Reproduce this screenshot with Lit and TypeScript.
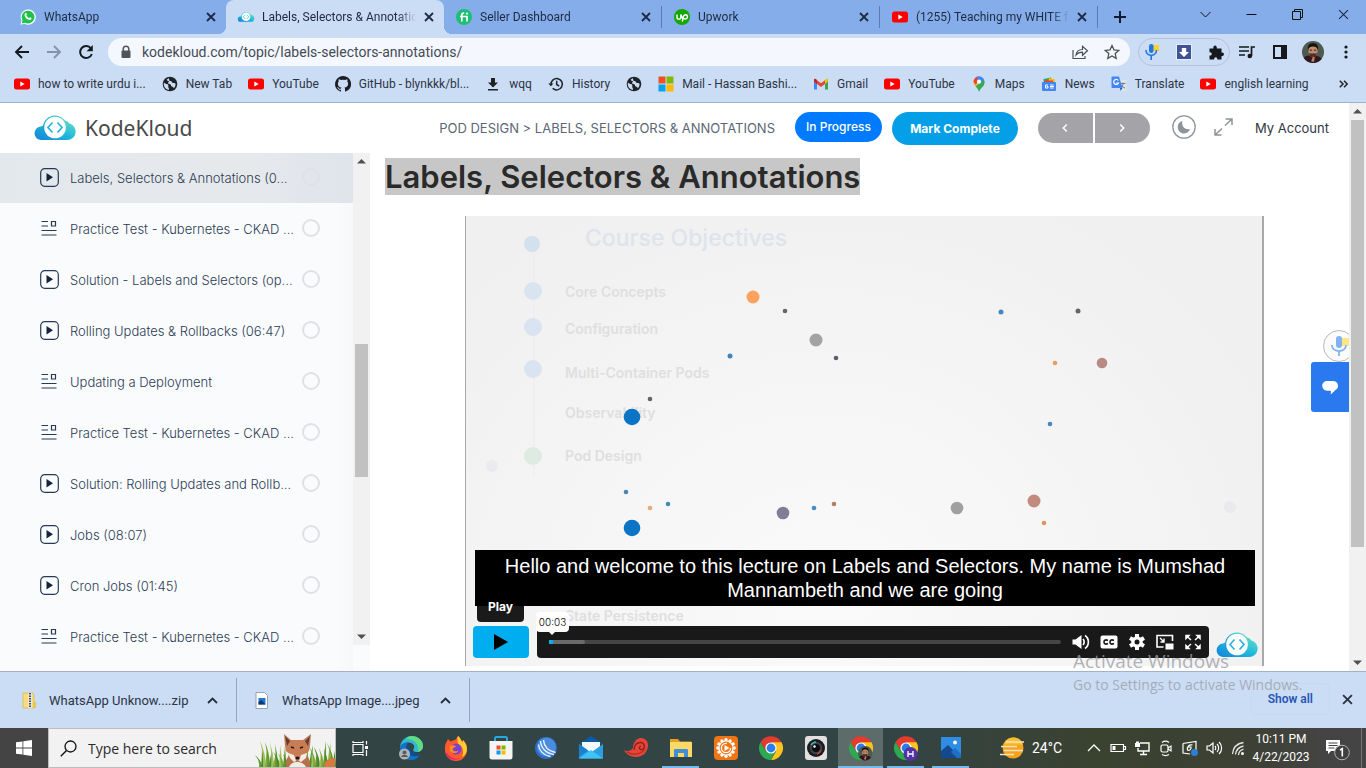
import { LitElement, html, css, svg, nothing } from "lit";
import { customElement } from "lit/decorators.js";
import { classMap } from "lit/directives/class-map.js";

const cloudLogo = html`<svg class="cloud" viewBox="0 0 40 26" aria-hidden="true">
  <defs>
    <linearGradient id="cl" x1="0" y1="1" x2="1" y2="0">
      <stop offset="0" stop-color="#1283d8" /><stop offset=".5" stop-color="#1fb6dc" /><stop offset="1" stop-color="#6fe3c0" />
    </linearGradient>
  </defs>
  <path d="M6.500 25a6.500 6.500 0 0 1-.5-13.400 6 6 0 0 1 4-1.100L19 4l11 1.500a8 8 0 0 1 4.500 3A8.400 8.400 0 0 1 32 25z" fill="url(#cl)" />
  <circle cx="20" cy="12.500" r="12" fill="url(#cl)" />
  <circle cx="20" cy="12.500" r="10.800" fill="#fff" />
  <path d="M17.500 7.500l-4.500 5 4.500 5M22.500 7.500l4.500 5-4.500 5" fill="none" stroke="#27b4e0" stroke-width="1.700" />
</svg>`;

const ytIcon = html`<svg viewBox="0 0 16 16"><rect y="2.500" width="16" height="11" rx="2.500" fill="#f00" /><path d="M6.300 5.500v5L10.700 8z" fill="#fff" /></svg>`;

const globeIcon = html`<svg viewBox="0 0 16 16"><circle cx="8" cy="8" r="7.300" fill="#1f2226" />
  <path d="M2 6.500c1.500 2 3.500 1.200 4.200 2.300.6 1-.6 1.700.3 2.700.7.8.5 1.800.2 2.600C3.800 13.400 1.800 11 1.700 8zM7 2.200c.6 1-.4 1.500.3 2.200 1 .8 2.300.2 2.500 1.500.2 1.400 2.500.4 3.700 1.800.3 1.800-.6 3.500-1.800 4.600-.3-1.200-.8-1.600-1.800-1.800-1.200-.3-.5-1.600-1.300-2.100-1-.6-2.400 0-2.500-1.300 0-1 1-1 .8-1.800C6.700 4.400 5 5 4.700 3.700 5.400 3 6.200 2.500 7 2.200z" fill="#cbdcf5" /></svg>`;

const icons = {
  whatsapp: html`<svg viewBox="0 0 16 16"><path d="M.4 15.800l1.200-4A7.600 7.600 0 1 1 4.500 14.700z" fill="#fff" /><path d="M1.700 14.500l.9-3.100a6.400 6.400 0 1 1 2.400 2.300z" fill="#1fc14b" /><path d="M5.200 4.200c.5-.5 1-.3 1.200.1l.5 1.200c.1.300-.5.800-.5 1.100.5 1.200 1.600 2 2.600 2.500.4 0 .7-.8 1-.8l1.500.8c.2.900-.6 1.800-1.600 1.800-2.700-.1-5.400-3-5.400-5 0-.7.300-1.300.7-1.700z" fill="#fff" /></svg>`,
  kk: cloudLogo,
  fiverr: html`<svg viewBox="0 0 16 16"><circle cx="8" cy="8" r="8" fill="#1dbf73" /><path d="M4 7.500h7v5M5.800 12.500V6c0-1.500.8-2 2.400-2" fill="none" stroke="#fff" stroke-width="1.700" /><circle cx="11" cy="4.600" r="1.100" fill="#fff" /></svg>`,
  upwork: html`<svg viewBox="0 0 16 16"><circle cx="8" cy="8" r="8" fill="#14a800" /><path d="M3 5.500v2.700c0 2.600 3.800 2.600 3.800 0V5.500c.4 2 1.500 3.600 3.300 4.400M8.300 12.500l1-4.700c.8-3 4.200-2.500 4.200 0 0 2.300-2.700 2.800-4 1.300" fill="none" stroke="#fff" stroke-width="1.400" /></svg>`,
  yt: ytIcon,
  globe: globeIcon,
  github: html`<svg viewBox="0 0 16 16"><path fill="#1b1f24" d="M8 0a8 8 0 0 0-2.500 15.600c.4.100.5-.2.500-.4v-1.400c-2.200.5-2.700-1-2.700-1-.4-.9-.9-1.200-.9-1.200-.7-.5.100-.5.100-.5.800.100 1.200.8 1.200.8.700 1.200 1.900.9 2.300.7.100-.5.300-.9.500-1.100-1.800-.2-3.600-.9-3.600-4 0-.9.300-1.600.8-2.100-.1-.2-.4-1 .1-2.100 0 0 .7-.2 2.200.8a7.600 7.600 0 0 1 4 0c1.500-1 2.200-.8 2.200-.8.400 1.100.200 1.900.100 2.100.5.600.8 1.300.8 2.100 0 3.100-1.900 3.800-3.700 4 .3.300.6.800.6 1.500v2.200c0 .2.100.5.600.4A8 8 0 0 0 8 0z" /></svg>`,
  download: html`<svg viewBox="0 0 16 16"><path d="M6 2h4v4.500h3L8 11.500l-5-5h3zM3 13h10v1.500H3z" fill="#1f2226" /></svg>`,
  history: html`<svg viewBox="0 0 16 16" fill="none" stroke="#1f2226" stroke-width="1.500"><path d="M3 8.500a5.700 5.700 0 1 1 1.700 3.800M8.700 4.800v3.700l2.500 1.600" /><path d="M.3 7.500h5.200L2.900 10.300z" fill="#1f2226" stroke="none" /></svg>`,
  ms: html`<svg viewBox="0 0 16 16"><path fill="#f25022" d="M.5.500h7v7h-7z" /><path fill="#7fba00" d="M8.500.500h7v7h-7z" /><path fill="#00a4ef" d="M.5 8.500h7v7h-7z" /><path fill="#ffb900" d="M8.500 8.500h7v7h-7z" /></svg>`,
  gmail: html`<svg viewBox="0 0 16 16"><path d="M1 4.500v9h3V7z" fill="#4285f4" /><path d="M15 4.500v9h-3V7z" fill="#34a853" /><path d="M4 4.200l4 3.100 4-3.100V8l-4 3-4-3z" fill="#ea4335" /><path d="M1 5.500V4c0-1.600 1.700-2 3 .2V8z" fill="#c5221f" /><path d="M15 5.500V4c0-1.600-1.700-2-3 .2V8z" fill="#fbbc04" /></svg>`,
  maps: html`<svg viewBox="0 0 16 16"><path d="M8 16c-.7-2.500-2-4-3.500-5.700L12.700 3A6 6 0 0 1 13 9c-1.500 2.400-4.200 4-5 7z" fill="#34a853" /><path d="M4.500 10.300C2.800 8 2 7 2.500 4.500L8 7.500z" fill="#fbbc04" /><path d="M2.500 5.500C2.700 3.600 4 1.500 6 .5l3 3-4.500 5.200z" fill="#ea4335" /><path d="M6 .4C9 -.5 12 1 13 3.300L9.800 7 6.500 4z" fill="#4285f4" /><circle cx="8" cy="5.700" r="2.100" fill="#fff" /></svg>`,
  news: html`<svg viewBox="0 0 16 16"><path d="M2.500 3L10 1.500l1 6-8 1z" fill="#34a853" /><path d="M8 2l6 1.500-1 5H7z" fill="#fbbc04" /><path d="M3 4.500h9v4H3z" fill="#ea4335" /><rect x="1" y="6" width="14" height="9" rx="1" fill="#4285f4" /><path d="M7 9H4.500v3H7v-1.500H5.800M9 9h3.500M9 10.500h4M9 12h3.500" stroke="#fff" fill="none" /></svg>`,
  translate: html`<svg viewBox="0 0 16 16"><path d="M6 4h9.500v11H9z" fill="#dfe3ea" /><path d="M9.500 7.500h5M12 6.500v1c0 2-1 3.500-2.500 4.500M10.500 9c.5 1.500 2 2.500 3.500 3" stroke="#777d88" fill="none" /><path d="M1.500.5H8L11.500 12H1.500c-.6 0-1-.4-1-1V1.500c0-.6.4-1 1-1z" fill="#4285f4" /><path d="M9 12h2.500L9.500 15z" fill="#2a56c6" /><path d="M7.300 4.500A2.500 2.500 0 1 0 7.500 7H5.300" stroke="#fff" fill="none" stroke-width="1.200" /></svg>`,
};

const cross = (w = 1.8) => html`<svg viewBox="0 0 10 10"><path d="M1 1l8 8M9 1L1 9" stroke="currentColor" stroke-width=${w} fill="none" /></svg>`;

const chromeWheel = svg`<path d="M22.400 6H12l5.200 9L12 24A12 12 0 0 0 22.400 6z" fill="#fcc31e" /><path d="M1.600 6A12 12 0 0 0 12 24l5-9-5.200 2.500L6.800 15z" fill="#2da94f" /><path d="M1.600 6A12 12 0 0 1 22.400 6.300H12L7 15z" fill="#e33b2e" /><circle cx="12" cy="12" r="5.600" fill="#fff" /><circle cx="12" cy="12" r="4.400" fill="#2b7de9" />`;

const face = svg`<circle cx="12" cy="12" r="12" fill="#4d5a4f" /><path d="M2 18.500C5 15 8 15.500 12 17c4-1.500 8 0 9.500 2.500A12 12 0 0 1 2 18.500z" fill="#33161d" /><ellipse cx="12" cy="11" rx="5" ry="6.500" fill="#c08b6c" /><path d="M6.500 10C6 3.500 9 2.500 12 2.500s6.200 1 5.500 7.500c-1-3-2.500-4-5.500-4s-4.700 1-5.500 4z" fill="#17120f" /><path d="M8 13c1.500 1 6.500 1 8 0 0 4-2 5.500-4 5.500S8 17 8 13z" fill="#4a3026" /><path d="M8.500 10h2.500M13 10h2.500" stroke="#2a1a12" stroke-width="1" /><path d="M10 22l2-5 2 1-1 5z" fill="#b98464" />`;

const apps: { name: string; art: unknown; on?: string }[] = [
  { name: "Microsoft Edge", art: svg`<path d="M1 11C2 4 7 0 12.500 0 19 0 24 4.500 24 10c0 4-3 6-6.500 6-3 0-4-1.500-3-3 .7-1 1-2 .5-3.500C14 7 11 6 8 6.500 4.500 7 2 9 1 11z" fill="#35b5d0" /><path d="M12.500 0C19 0 24 4.500 24 10c0 3-2 5.500-5 6 1-4 0-9-6-12-2-.9-4-.9-6-.4C8.500 1 10.500 0 12.500 0z" fill="#5edc7f" /><path d="M1 11c1.500-3.500 5-5 8.500-4.500C7 8 6.500 12 8 15.500c2 4 7 6 13 3.500-2 3-5 5-9 5C5 24 0 18 1 11z" fill="#1173c5" /><path d="M8 15.500C6.500 12 7.500 8 11 7c-3 4 0 10 10 12-5 3-11 1-13-3.500z" fill="#0a4f9c" /><circle cx="5.500" cy="18" r="5.500" fill="#aeb4b8" /><circle cx="5.500" cy="16.400" r="2" fill="#565c61" /><path d="M2 21c1-3 6-3 7 0z" fill="#565c61" />` },
  { name: "Firefox", art: svg`<path d="M2 7l2-4 2.500 2.500C8 4.500 9.500 4 11 4l3-4c2 2 2 4 4.500 5L19 4c3 3 4.500 6 4 10a11 11 0 0 1-22 0c-.2-3 0-5 1-7z" fill="#ff5a2b" /><path d="M14 0c3 2 2 4 5 6.500L19 4c3 3 4.500 7 3.800 10.500C22 19 18 21 18 21c2-4 1-9-1-11-4-2-4-6-3-10z" fill="#ffcb2e" /><path d="M3 17c2 4 7 7 13 5-4 3-12 2-14-5z" fill="#e31587" /><circle cx="12" cy="13" r="5.500" fill="#7b3fd4" /><path d="M6 10c2-1 5-1 6 .5-1 1.500-3 1-3.500 2.500.500 2.500 4 3 6 1.500-1 3.500-7 4-9-.5z" fill="#ff8a1e" />` },
  { name: "Microsoft Store", art: svg`<path d="M6 6V2.500C6 1.500 6.500 1 7.500 1h9c1 0 1.500.5 1.500 1.500V6" fill="none" stroke="#27a9e0" stroke-width="2" /><path d="M.5 5h23v16c0 1.700-1 2.500-2.500 2.500H3C1.500 23.500.5 22.700.5 21z" fill="#f4f4f4" /><path d="M7.500 9.500h4v4h-4z" fill="#f05125" /><path d="M12.500 9.500h4v4h-4z" fill="#7fba00" /><path d="M7.500 14.500h4v4h-4z" fill="#00a1f1" /><path d="M12.500 14.500h4v4h-4z" fill="#ffb900" />` },
  { name: "Connect", art: svg`<circle cx="12" cy="12" r="11" fill="#2b6cc4" /><circle cx="12.500" cy="11" r="9.500" fill="#4b8ce0" /><path d="M6.500 5c.5 7 5.500 12.500 13.500 13.500M9.500 4c.5 6 4.500 11 12 12.500M4.500 8.500c.5 6 5 11 12 12" fill="none" stroke="#eaf3fd" stroke-width="1.400" />` },
  { name: "Mail", art: svg`<path d="M0 8L12 0l12 8z" fill="#0a5ba8" /><path d="M3 6h18v10H3z" fill="#f3f8fc" /><path d="M0 8l12 8.500L24 8v14.500H0z" fill="#2a9fe4" /><path d="M0 22.500L12 14l12 8.500z" fill="#3fc3f5" /><path d="M0 8l9 6.500L0 21z" fill="#1a80d0" />` },
  { name: "Nautilus", art: svg`<path d="M0 14c3 2 7 1 9-2 0-6 4-10 8-10 4 0 7 3 7 7 0 7-5 12-12 12C6 21 2 18 0 14z" fill="#e2463a" /><path d="M10 14c0-5 3-8 7-7.500 4 .5 4.500 6 1 7-3 .6-3.500-3-1-3.400" fill="none" stroke="#961f18" stroke-width="1.400" /><path d="M3 16c5 3.500 15 3 18-4" fill="none" stroke="#b82a20" stroke-width="1.200" />` },
  { name: "File Explorer", art: svg`<path d="M1 3h8l2 2.500h11V9H1z" fill="#e2a21d" /><path d="M1 6h22v15H1z" fill="#fbd867" /><path d="M5 21v-6.500c0-1 .5-1.500 1.500-1.500h11c1 0 1.500.5 1.500 1.500V21h-4v-4H9v4z" fill="#3f8fd2" />`, on: "wide" },
  { name: "Media Player", art: svg`<rect width="24" height="24" rx="4" fill="#f07514" /><g fill="#fff"><circle cx="12" cy="12" r="7.600" />${Array.from({ length: 12 }, (_, i) => svg`<circle cx=${(12 + 8.2 * Math.cos((i * Math.PI) / 6)).toFixed(2)} cy=${(12 + 8.2 * Math.sin((i * Math.PI) / 6)).toFixed(2)} r="1.700" />`)}</g><circle cx="12" cy="12" r="6.400" fill="#f07514" /><circle cx="12" cy="12" r="4.600" fill="none" stroke="#fff" stroke-width="1.400" stroke-dasharray="22 7" /><path d="M10.500 9l5 3-5 3z" fill="#fff" />` },
  { name: "Google Chrome", art: chromeWheel },
  { name: "Camera", art: svg`<rect x="1" width="22" height="24" rx="3" fill="#e3e1df" /><circle cx="12" cy="12" r="9" fill="#1a1b1e" /><circle cx="12" cy="12" r="6.300" fill="#3a4248" /><circle cx="12" cy="12" r="4" fill="#0b0c10" /><path d="M7 9a6 6 0 0 1 5-3" stroke="#3fb6b0" stroke-width="1.500" fill="none" /><path d="M13 18a6 6 0 0 0 4-4" stroke="#c0443f" stroke-width="1.500" fill="none" /><circle cx="10.500" cy="10.500" r="1.200" fill="#fff" />` },
  { name: "Chrome profile", art: svg`${chromeWheel}<g transform="translate(9 10) scale(.6)">${face}</g>`, on: "active" },
  { name: "Chrome profile H", art: svg`${chromeWheel}<circle cx="16.500" cy="18" r="7" fill="#5232a8" /><path d="M14 15v6M19 15v6M14 18h5" stroke="#fff" stroke-width="1.300" />`, on: "line" },
  { name: "Photos", art: svg`<rect x="2" y="1" width="20" height="21" fill="#2f8de4" /><path d="M2 15l7-6 13 13H2z" fill="#134a8e" /><path d="M12 16l4-4 6 6v4h-4z" fill="#1f6fc4" /><circle cx="16" cy="6.500" r="1.900" fill="#fff" />`, on: "line" },
];

const tabs = [
  { icon: "whatsapp", title: "WhatsApp" },
  { icon: "kk", title: "Labels, Selectors & Annotatio", active: true },
  { icon: "fiverr", title: "Seller Dashboard" },
  { icon: "upwork", title: "Upwork" },
  { icon: "yt", title: "(1255) Teaching my WHITE fr" },
];

const bookmarks = [
  ["yt", "how to write urdu i..."],
  ["globe", "New Tab"],
  ["yt", "YouTube"],
  ["github", "GitHub - blynkkk/bl..."],
  ["download", "wqq"],
  ["history", "History"],
  ["globe", ""],
  ["ms", "Mail - Hassan Bashi..."],
  ["gmail", "Gmail"],
  ["yt", "YouTube"],
  ["maps", "Maps"],
  ["news", "News"],
  ["translate", "Translate"],
  ["yt", "english learning"],
];

const lessons = [
  ["video", "Labels, Selectors & Annotations (0..."],
  ["lab", "Practice Test - Kubernetes - CKAD ..."],
  ["video", "Solution - Labels and Selectors (op..."],
  ["video", "Rolling Updates & Rollbacks (06:47)"],
  ["lab", "Updating a Deployment"],
  ["lab", "Practice Test - Kubernetes - CKAD ..."],
  ["video", "Solution: Rolling Updates and Rollb..."],
  ["video", "Jobs (08:07)"],
  ["video", "Cron Jobs (01:45)"],
  ["lab", "Practice Test - Kubernetes - CKAD ..."],
];

// Floating particles of the intro slide: x, y, radius, colour
const dots: [number, number, number, string][] = [
  [67, 28, 8, "#d3e1ee"], [68, 75, 9, "#dae4f1"], [68, 111, 9, "#dae3f1"], [68, 153, 9, "#dae4f1"], [68, 240, 9, "#deebe3"],
  [27, 250, 6, "#e9ebee"], [765, 291, 6, "#e9e9ee"],
  [288, 81, 6.5, "#fba35e"], [320, 95, 2.3, "#65656b"], [351, 124, 6.5, "#a3a3a3"], [371, 142, 2.3, "#5f5c6e"],
  [265, 140, 2.5, "#3c86bd"], [185, 183, 2.3, "#66606f"], [167, 201, 8.3, "#0b74c4"], [536, 96, 2.5, "#4488bb"],
  [613, 95, 2.5, "#666"], [590, 147, 2.3, "#e79c68"], [637, 147, 5.3, "#b98a83"], [585, 208, 2.3, "#4488bb"],
  [161, 276, 2.3, "#4a86b0"], [203, 288, 2.3, "#4488b5"], [185, 292, 2.3, "#e2ac7c"], [167, 312, 8.3, "#0b74c4"],
  [318, 297, 6.3, "#827c95"], [349, 292, 2.3, "#4a8cc0"], [369, 288, 2.3, "#b57c66"], [492, 292, 6.3, "#a0a0a0"],
  [569, 285, 6.5, "#c18c7e"], [579, 307, 2.3, "#e2955c"],
];

const topics: [number, string][] = [
  [81, "Core Concepts"], [118, "Configuration"], [162, "Multi-Container Pods"], [202, "Observability"], [245, "Pod Design"], [405, "State Persistence"],
];

@customElement("app-root")
export class AppRoot extends LitElement {
  static styles = css`
    :host { display: flex; flex-direction: column; height: 100vh; min-width: 0; overflow: hidden; position: relative; background: #fff; font-family: Roboto, "Open Sans", sans-serif; font-size: 12px; color: #2b3444; }
    * { box-sizing: border-box; }
    button, input { font: inherit; color: inherit; border: 0; padding: 0; margin: 0; background: none; }
    button { display: flex; align-items: center; justify-content: center; }
    a { color: inherit; text-decoration: none; }
    svg { display: block; overflow: visible; flex: none; }
    ul { list-style: none; margin: 0; padding: 0; }

    .strip { display: flex; height: 34px; background: #85ade9; padding-left: 8px; flex: none; color: #1d2a42; }
    .tab { position: relative; display: flex; align-items: center; flex: 0 1 218px; min-width: 0; height: 34px; padding: 0 10px 0 12px; gap: 8px; }
    .tab.sep { border-right: 1px solid #5a7cb0; border-image: linear-gradient(transparent 20%, #5a7cb0 20% 80%, transparent 80%) 1; }
    .tab svg { width: 16px; height: 16px; }
    .tab .title { flex: 1; min-width: 0; overflow: hidden; white-space: nowrap; mask-image: linear-gradient(90deg, #000 88%, transparent); }
    .tab .shut, .tab .shut svg { width: 10px; height: 10px; }
    .tab.active { background: #cbdcf5; border-radius: 8px 8px 0 0; }
    .tab.active::before, .tab.active::after { content: ""; position: absolute; bottom: 0; width: 8px; height: 8px; }
    .tab.active::before { left: -8px; background: radial-gradient(circle at 0 0, transparent 8px, #cbdcf5 8px); }
    .tab.active::after { right: -8px; background: radial-gradient(circle at 100% 0, transparent 8px, #cbdcf5 8px); }
    .plus { width: 44px; }
    .plus svg { width: 12px; height: 12px; }
    .win { display: flex; margin-left: auto; }
    .win button { width: 46px; height: 28px; }
    .win svg { width: 11px; height: 11px; }

    .toolbar { display: flex; align-items: center; height: 36px; background: #cbdcf5; padding: 0 4px 0 6px; flex: none; }
    .nav { width: 32px; }
    .nav svg { width: 16px; height: 16px; }
    .omnibox { display: flex; align-items: center; flex: 1; min-width: 0; height: 28px; margin: 0 8px 0 6px; padding: 0 10px 0 12px; border-radius: 14px; background: #f4f8fe; color: #454b55; gap: 10px; }
    .omnibox input { flex: 1; min-width: 0; font-size: 14px; outline: 0; }
    .omnibox .lock { width: 12px; height: 14px; }
    .omnibox .act svg { width: 16px; height: 16px; }
    .omnibox .acts { display: flex; gap: 16px; }
    .ext { display: flex; justify-content: space-between; align-items: center; width: 92px; height: 28px; border: 1px solid #b3c3df; border-radius: 14px; padding: 0 5px; }
    .ext svg { width: 16px; height: 16px; }
    .tools { display: flex; align-items: center; }
    .tools button { width: 33px; height: 28px; }
    .tools svg { width: 16px; height: 16px; }
    .tools .avatar svg { width: 22px; height: 22px; }

    .marks { display: flex; align-items: center; height: 33px; padding: 0 18px 4px 14px; background: #cbdcf5; border-bottom: 1px solid #a3b0c8; gap: 16px; flex: none; white-space: nowrap; }
    .marks a { display: flex; align-items: center; gap: 8px; }
    .marks svg { width: 16px; height: 16px; }
    .marks .more { margin-left: auto; }
    .marks .more svg { width: 9px; height: 8px; }

    .page { display: flex; flex: 1; min-height: 0; position: relative; font-family: Inter, sans-serif; }
    .site { display: flex; flex-direction: column; flex: 1; min-width: 0; position: relative; overflow: hidden; }
    .head { display: flex; align-items: center; height: 50px; flex: none; padding: 0 20px 0 35px; background: #fff; }
    .brand { display: flex; align-items: center; gap: 10px; margin-right: auto; font-family: "Noto Sans", sans-serif; font-size: 21px; color: #484848; }
    .cloud { width: 40px; height: 26px; }
    .crumbs { font-size: 13px; color: #5b6675; margin-right: 20px; }
    .pill { border-radius: 18px; color: #fff; font-size: 12px; }
    .prog { background: #007bff; width: 87px; height: 30px; font-weight: 500; margin: 0 10px 3px 0; }
    .mark { background: #049fe6; width: 126px; height: 33px; font-weight: 700; margin-right: 20px; }
    .pager { display: flex; gap: 2px; margin-right: 22px; }
    .pager button { width: 55px; height: 30px; background: #a4a4a8; border-radius: 15px 0 0 15px; }
    .pager button:last-child { border-radius: 0 15px 15px 0; }
    .pager svg { width: 6px; height: 8px; }
    .moon { margin: 0 18px 3px 0; }
    .moon svg { width: 24px; height: 24px; }
    .grow { margin: 0 22px 2px 0; }
    .grow svg { width: 19px; height: 18px; }
    .acct { font-size: 13px; color: #2f3640; }

    .body { display: flex; flex: 1; min-height: 0; }
    .side { display: flex; width: 370px; flex: none; background: #fafbfd; }
    .lessons { flex: 1; min-width: 0; display: flex; flex-direction: column; gap: 1px; overflow: hidden; background: linear-gradient(90deg, #fafbfd 94%, #f6f8fa); }
    .lessons li { display: flex; align-items: center; height: 50px; flex: none; padding: 0 33px 0 40px; gap: 11px; font-size: 13px; font-weight: 300; color: #2c3c54; }
    .lessons li.current { background: linear-gradient(90deg, #e3e8ec, #e6e9ec 70%, #dfe4ec); }
    .lessons a { display: flex; align-items: center; flex: 1; min-width: 0; gap: 11px; white-space: nowrap; }
    .lessons svg { width: 19px; height: 19px; margin-bottom: 2px; }
    .lessons input { appearance: none; width: 18px; height: 18px; border: 2px solid #dfe1e4; border-radius: 50%; margin-bottom: 3px; flex: none; }
    .bar { display: flex; flex-direction: column; align-items: center; width: 17px; background: #f1f1f1; flex: none; }
    .bar svg { width: 9px; height: 5px; margin: 6px 0; color: #505050; }
    .bar .rail { flex: 1; width: 13px; position: relative; }
    .bar .thumb { position: absolute; left: 0; right: 0; background: #c1c1c1; }
    .side .bar { height: calc(100% - 26px); }
    .side .thumb { top: 38%; height: 29%; }
    .page > .bar .thumb { top: 0; height: 80%; }

    .main { flex: 1; min-width: 0; padding: 5px 5px 0 15px; overflow: hidden; }
    h1 { margin: 0 0 20px; font-size: 31px; line-height: 38px; font-weight: 600; color: #2a2a2a; white-space: nowrap; }
    h1 span { background: #c7c7c7; }
    .player { position: relative; max-width: 799px; margin: 0 auto; aspect-ratio: 799 / 450; overflow: hidden; border: solid #a9a9a9; border-width: 0 2px 0 1px; background: radial-gradient(ellipse at 45% 85%, #fafafa, #f6f6f6 35%, #f0f0f0 80%); }
    .slide { width: 100%; height: 100%; font-weight: 600; font-size: 14px; fill: #dedfe0; }
    .slide .heading { font-size: 23px; font-weight: 500; fill: #dfe3ec; }
    .under { position: absolute; left: 7px; right: 5px; bottom: 8px; display: flex; flex-direction: column; }
    .caption { margin: 0 2px 20px 2px; padding: 4px 20px; background: #000; color: #fff; text-align: center; font: 20px/24px "Liberation Sans", Arial, sans-serif; }
    .controls { display: flex; align-items: flex-end; gap: 8px; }
    .playwrap { position: relative; }
    .tip { position: absolute; left: 4px; bottom: 36px; width: 47px; height: 32px; display: flex; align-items: center; justify-content: center; color: #fff; font-weight: 700; border-radius: 4px; background: linear-gradient(#000 50%, #1a1a1a 50%); }
    .play { width: 56px; height: 32px; border-radius: 4px; background: #00adef; }
    .play svg { width: 14px; height: 16px; }
    .console { display: flex; align-items: center; flex: 1; min-width: 0; height: 32px; border-radius: 4px; background: #191919; padding: 0 6px 0 12px; gap: 10px; color: #fff; }
    .track { position: relative; flex: 1; height: 4px; border-radius: 2px; background: #454545; }
    .loaded { width: 7%; height: 4px; border-radius: 2px; background: #6b6b6b; }
    .seen { position: absolute; left: 0; top: 0; width: 4px; height: 4px; background: #00adef; }
    .time { position: absolute; left: -13px; bottom: 12px; width: 33px; height: 20px; display: flex; align-items: center; justify-content: center; border-radius: 4px; background: #fff; color: #000; font-size: 10px; font-weight: 300; }
    .time::after { content: ""; position: absolute; top: 20px; left: 13px; border: 3px solid transparent; border-top-color: #fff; }
    .console .set { display: flex; gap: 8px; }
    .console .set svg { width: 20px; height: 18px; }

    .float { position: absolute; right: 0; top: 227px; display: flex; flex-direction: column; align-items: flex-end; }
    .voice { width: 32px; height: 32px; border: 1px solid #b9b9bd; border-radius: 50%; background: #fbfbfb; margin-right: -6px; }
    .voice svg { width: 20px; height: 22px; opacity: .6; }
    .chat { width: 38px; height: 50px; border-radius: 3px 0 0 3px; background: #2a79ee; }
    .chat svg { width: 16px; height: 15px; }

    .shelf { display: flex; align-items: center; height: 57px; flex: none; background: #cbdcf5; border-top: 1px solid #a3b0c8; }
    .file { display: flex; align-items: center; width: 233px; height: 44px; border-right: 1px solid #93a5c6; padding: 0 18px 0 17px; font-size: 13px; gap: 12px; white-space: nowrap; }
    .file:first-child { width: 237px; padding-left: 21px; }
    .file > svg { width: 16px; height: 17px; }
    .file button { margin-left: auto; }
    .file button svg { width: 11px; height: 7px; }
    .all { margin: 0 12px 2px auto; height: 32px; padding: 0 16px; font-weight: 600; color: #2657b4; border: 1px solid #c6d8f4; border-radius: 4px; }
    .drop { margin: 0 13px 2px 0; }
    .drop svg { width: 11px; height: 11px; }

    .mill { position: absolute; right: 56px; bottom: 70px; display: flex; flex-direction: column; width: 237px; color: #9b9fa6cc; white-space: nowrap; pointer-events: none; font-family: "Open Sans", sans-serif; }
    .mill b { font-weight: 400; font-size: 19px; line-height: 22px; }
    .mill span { font-size: 14px; line-height: 26px; }

    .task { display: flex; align-items: center; height: 40px; flex: none; background: linear-gradient(90deg, #444 3%, #334445 25%, #334445 65%, #3a4230 80%, #3d4135 92%, #444 97%); color: #fff; }
    .start { width: 48px; height: 40px; background: #444; }
    .start svg { width: 16px; height: 16px; }
    .seek { display: flex; align-items: center; width: 288px; height: 40px; background: #f2f2f2; border: 1px solid #bdbdbd; padding-left: 11px; gap: 11px; color: #222; }
    .seek input { flex: 1; min-width: 0; font-family: "Open Sans", sans-serif; font-size: 14px; outline: 0; }
    .seek input::placeholder { color: #2b2b2b; opacity: 1; }
    .seek .lens { width: 17px; height: 17px; }
    .seek .fox { width: 76px; height: 38px; }
    .view { width: 48px; height: 40px; margin-right: 4px; }
    .view svg { width: 16px; height: 15px; }
    .app { width: 45px; height: 40px; border: solid transparent; border-width: 2px 0; background-clip: padding-box; }
    .app svg { width: 24px; height: 24px; }
    .app.active { background: #5d6b69; background-clip: border-box; border-bottom-color: #76b9ed; }
    .app.line, .app.wide { width: 37px; margin: 0 4px; border-bottom-color: #76b9ed; }
    .tray { display: flex; align-items: center; margin-left: auto; }
    .wx { gap: 8px; font-size: 14px; margin-right: 24px; }
    .wx svg { width: 24px; height: 22px; }
    .sys { display: flex; gap: 8px; }
    .sys svg { width: 16px; height: 16px; }
    .clock { display: flex; flex-direction: column; align-items: center; width: 66px; font-size: 12px; line-height: 18px; margin-left: 2px; white-space: nowrap; }
    .note { width: 44px; height: 40px; }
    .note svg { width: 24px; height: 24px; }
    .peek { width: 5px; height: 40px; border-left: 1px solid #777; margin-left: 3px; }
  `;

  private strip() {
    return html`<div class="strip" role="tablist">
      ${tabs.map(
        (t, i) => html`<div role="tab" class=${classMap({ tab: true, active: !!t.active, sep: i > 1 })}>
          ${icons[t.icon as keyof typeof icons]}<span class="title">${t.title}</span>
          <button class="shut" aria-label="Close tab">${cross()}</button>
        </div>`
      )}
      <button class="plus" aria-label="New tab"><svg viewBox="0 0 12 12"><path d="M6 0v12M0 6h12" stroke="#111c30" stroke-width="2" /></svg></button>
      <div class="win">
        <button aria-label="Search tabs"><svg viewBox="0 0 11 11"><path d="M.5 3l5 5 5-5" fill="none" stroke="#111" /></svg></button>
        <button aria-label="Minimize"><svg viewBox="0 0 11 11"><path d="M.5 5.500h10" stroke="#111" /></svg></button>
        <button aria-label="Restore"><svg viewBox="0 0 11 11"><path d="M.5 2.500h8v8h-8zM2.500 2.500v-2h8v8h-2" fill="none" stroke="#111" /></svg></button>
        <button aria-label="Close">${cross(1)}</button>
      </div>
    </div>`;
  }

  private toolbar() {
    const mic = svg`<path d="M9 1h6v6H9z" fill="#fdd22c" /><rect x="5" y="0" width="4.500" height="9" rx="2.200" fill="#2178e0" /><path d="M2 6c0 7 10.500 7 10.500 0M7.200 11.500V16" fill="none" stroke="#2178e0" stroke-width="1.600" />`;
    return html`<div class="toolbar">
      <button class="nav" aria-label="Back"><svg viewBox="0 0 16 16"><path d="M15 8H2M8 2L2 8l6 6" fill="none" stroke="#151a22" stroke-width="1.900" /></svg></button>
      <button class="nav" aria-label="Forward"><svg viewBox="0 0 16 16"><path d="M1 8h13M8 2l6 6-6 6" fill="none" stroke="#8793ab" stroke-width="1.900" /></svg></button>
      <button class="nav" aria-label="Reload"><svg viewBox="0 0 16 16"><path d="M13 4.500A6 6 0 1 0 13.800 10" fill="none" stroke="#151a22" stroke-width="2" /><path d="M14.800 1v6.200H8.600z" fill="#151a22" /></svg></button>
      <div class="omnibox">
        <svg class="lock" viewBox="0 0 12 14"><path d="M3.200 6V4a2.800 2.800 0 0 1 5.600 0v2" fill="none" stroke="#50555d" stroke-width="1.500" /><rect x="1.500" y="5.500" width="9" height="7.500" rx="1" fill="#50555d" /></svg>
        <input aria-label="Address" value="kodekloud.com/topic/labels-selectors-annotations/" />
        <div class="acts">
          <button class="act" aria-label="Share"><svg viewBox="0 0 16 16" fill="none" stroke="#4a505a" stroke-width="1.200"><path d="M1 6v8.500h12V12" /><path d="M4 11c.5-4 3-5.500 6.500-5.500V2.300l5 4.500-5 4.500V8.200C7.500 8.200 5.500 9 4 11z" /></svg></button>
          <button class="act" aria-label="Bookmark"><svg viewBox="0 0 16 16"><path d="M8 1.500l2 4.400 4.800.5-3.600 3.200 1 4.800L8 12l-4.200 2.400 1-4.800L1.200 6.400 6 5.900z" fill="none" stroke="#4a505a" stroke-width="1.300" /></svg></button>
        </div>
      </div>
      <div class="ext">
        <button aria-label="Voice typing"><svg viewBox="0 0 16 16">${mic}</svg></button>
        <button aria-label="Downloader"><svg viewBox="0 0 16 16"><rect x=".5" y=".5" width="15" height="15" fill="#3d5596" stroke="#e8eefa" /><path d="M5.800 4h4.400v4H13l-5 5-5-5h2.800z" fill="#fff" /></svg></button>
        <button aria-label="Extensions"><svg viewBox="0 0 16 16"><path d="M1.500 4.500h4c-1-4 4-4 3.300 0h4.700v4c3.300-.8 3.300 4 0 3.500V15.500H9.200c.8-3-3.700-3-3 0H1.500v-4c3 .6 3-4 0-3.300z" fill="#15181d" /></svg></button>
      </div>
      <div class="tools">
        <button aria-label="Media"><svg viewBox="0 0 16 16"><path d="M0 3h10M0 7h10M0 11h6" stroke="#15181d" stroke-width="1.700" /><path d="M12.500 12V3h3.500" fill="none" stroke="#15181d" stroke-width="1.700" /><circle cx="10.800" cy="12" r="2.300" fill="#15181d" /></svg></button>
        <button aria-label="Side panel"><svg viewBox="0 0 16 16"><path d="M2 2h12v12H2z" fill="none" stroke="#15181d" stroke-width="2" /><path d="M9 2h5v12H9z" fill="#15181d" /></svg></button>
        <button class="avatar" aria-label="Profile"><svg viewBox="0 0 24 24">${face}</svg></button>
        <button aria-label="Menu"><svg viewBox="0 0 16 16" fill="#15181d"><circle cx="8" cy="3" r="1.600" /><circle cx="8" cy="8" r="1.600" /><circle cx="8" cy="13" r="1.600" /></svg></button>
      </div>
    </div>
    <nav class="marks" aria-label="Bookmarks">
      ${bookmarks.map(([i, t]) => html`<a href="#" aria-label=${t || "Web page"}>${icons[i as keyof typeof icons]}${t ? html`<span>${t}</span>` : nothing}</a>`)}
      <button class="more" aria-label="More bookmarks"><svg viewBox="0 0 9 8"><path d="M.8.800L4 4 .8 7.200M5 .8L8.200 4 5 7.200" fill="none" stroke="#1f2226" stroke-width="1.500" /></svg></button>
    </nav>`;
  }

  private header() {
    return html`<header class="head">
      <a class="brand" href="#">${cloudLogo}<span>KodeKloud</span></a>
      <span class="crumbs">POD DESIGN &gt; LABELS, SELECTORS &amp; ANNOTATIONS</span>
      <button class="pill prog">In Progress</button>
      <button class="pill mark">Mark Complete</button>
      <div class="pager">
        <button aria-label="Previous"><svg viewBox="0 0 6 8"><path d="M4.800.500L1.300 4l3.500 3.500" fill="none" stroke="#fff" stroke-width="1.500" /></svg></button>
        <button aria-label="Next"><svg viewBox="0 0 6 8"><path d="M1.200.500L4.700 4 1.200 7.500" fill="none" stroke="#fff" stroke-width="1.500" /></svg></button>
      </div>
      <button class="moon" aria-label="Dark mode"><svg viewBox="0 0 24 24"><circle cx="12" cy="12" r="11.200" fill="none" stroke="#8f949b" stroke-width="1.300" /><path d="M10.500 6a6.300 6.300 0 1 0 7.500 8c-5 1.500-9-3-7.500-8z" fill="#8f949b" /></svg></button>
      <button class="grow" aria-label="Full screen"><svg viewBox="0 0 19 18" fill="none" stroke="#8f949b" stroke-width="1.500"><path d="M11 7.500l7-6.500M11.500 1H18v6M8 10.500L1 17M7.500 17H1v-6" /></svg></button>
      <a class="acct" href="#">My Account</a>
    </header>`;
  }

  private scrollbar() {
    return html`<div class="bar" aria-hidden="true">
      <svg viewBox="0 0 9 5"><path d="M0 4.500L4.500 0 9 4.500z" fill="currentColor" /></svg>
      <div class="rail"><div class="thumb"></div></div>
      <svg viewBox="0 0 9 5"><path d="M0 .500L4.500 5 9 .500z" fill="currentColor" /></svg>
    </div>`;
  }

  private sidebar() {
    const video = html`<svg viewBox="0 0 19 19"><rect x=".7" y=".7" width="17.600" height="17.600" rx="4" fill="none" stroke="#243a56" stroke-width="1.200" /><path d="M6.500 5l6.500 4.300-6.500 4.300z" fill="#14243d" /></svg>`;
    const lab = html`<svg viewBox="0 0 19 19"><path d="M1.500 2.500H8M1.500 7H8M1.500 11.500h15M1.500 16h15M11.500 2.500h4V7h-4z" fill="none" stroke="#243a56" stroke-width="1.200" /></svg>`;
    return html`<aside class="side">
      <ul class="lessons">
        ${lessons.map(
          ([kind, name], i) => html`<li class=${classMap({ current: i === 0 })}>
            <a href="#">${kind === "video" ? video : lab}<span>${name}</span></a>
            <input type="checkbox" aria-label=${name} />
          </li>`
        )}
      </ul>
      ${this.scrollbar()}
    </aside>`;
  }

  private player() {
    return html`<div class="player">
      <svg class="slide" viewBox="0 0 796 450" role="img" aria-label="Course objectives slide">
        <path d="M68 20v240" stroke="#ebebec" stroke-width="1" />
        <text class="heading" x="119" y="30">Course Objectives</text>
        ${topics.map(([y, t]) => svg`<text x="99" y=${y}>${t}</text>`)}
        ${dots.map(([x, y, r, c]) => svg`<circle cx=${x - 1} cy=${y} r=${r} fill=${c} />`)}
      </svg>
      <div class="under">
        <div class="caption">Hello and welcome to this lecture on Labels and Selectors. My name is Mumshad<br />Mannambeth and we are going</div>
        <div class="controls">
          <div class="playwrap">
            <span class="tip">Play</span>
            <button class="play" aria-label="Play"><svg viewBox="0 0 14 16"><path d="M0 0l14 8-14 8z" fill="#000" /></svg></button>
          </div>
          <div class="console">
            <div class="track"><div class="loaded"></div><div class="seen"></div><span class="time">00:03</span></div>
            <div class="set">
              <button aria-label="Volume"><svg viewBox="0 0 20 18" fill="none" stroke="#fff" stroke-width="1.700"><path d="M1.500 6.500h3l6-4.500v14l-6-4.500h-3z" fill="#fff" stroke="none" /><path d="M12 6c1.500 1.500 1.500 4.500 0 6M14 2.500c4.500 3 4.500 10 0 13" /></svg></button>
              <button aria-label="Captions"><svg viewBox="0 0 20 18"><rect x="1.500" y="2.500" width="17" height="13" rx="2" fill="#fff" /><path d="M9 7.500c-3-1.500-4 .3-4 1.500s1 3 4 1.500M15 7.500c-3-1.500-4 .3-4 1.500s1 3 4 1.500" fill="none" stroke="#191919" stroke-width="1.600" /></svg></button>
              <button aria-label="Settings"><svg viewBox="0 0 20 18"><path d="M10 1v16M3 5l14 8M17 5L3 13" stroke="#fff" stroke-width="4" /><circle cx="10" cy="9" r="4.300" fill="#fff" stroke="#fff" stroke-width="3" /><circle cx="10" cy="9" r="2.500" fill="#191919" /></svg></button>
              <button aria-label="Picture in picture"><svg viewBox="0 0 20 18"><path d="M8.500 14H2V2.500h15.500V8" fill="none" stroke="#fff" stroke-width="1.600" /><path d="M10.500 10.500h8v6h-8z" fill="#fff" /><path d="M5 5l3.500 3.500M9 5.500V9H5.500" fill="none" stroke="#fff" stroke-width="1.400" /></svg></button>
              <button aria-label="Fullscreen"><svg viewBox="0 0 20 18" fill="#fff" stroke="#fff" stroke-width="1.500"><path d="M3 2.500h3l-3 3zM17 2.500h-3l3 3zM3 15.500h3l-3-3zM17 15.500h-3l3-3zM3 2.500l5 4.500M17 2.500L12 7M3 15.500L8 11M17 15.500L12 11" /></svg></button>
            </div>
          </div>
          ${cloudLogo}
        </div>
      </div>
    </div>`;
  }

  private taskbar() {
    const blades = Array.from({ length: 38 }, (_, i) => {
      const x = i * 2;
      const h = 12 + ((i * 7) % 15);
      const lean = ((i * 5) % 9) - 4;
      return svg`<path d="M${x} 38Q${x + 1} ${38 - h / 2} ${x + lean} ${38 - h}Q${x + 3} ${38 - h / 2} ${x + 3} 38z" fill=${["#5f9a2c", "#4c8a28", "#a3bf58", "#7fa93c"][i % 4]} />`;
    });
    return html`<footer class="task">
      <button class="start" aria-label="Start"><svg viewBox="0 0 16 16"><path d="M0 2.300L6.500 1.400v6.200H0zM7.300 1.300L16 0v7.600H7.300zM0 8.400h6.500v6.200L0 13.700zM7.300 8.400H16V16l-8.700-1.300z" fill="#fff" /></svg></button>
      <label class="seek">
        <svg class="lens" viewBox="0 0 17 17"><circle cx="10.500" cy="6.500" r="5.500" fill="none" stroke="#111" stroke-width="1.300" /><path d="M6.500 10.500L.8 16.200" stroke="#111" stroke-width="1.400" /></svg>
        <input type="text" placeholder="Type here to search" aria-label="Type here to search" />
        <svg class="fox" viewBox="0 0 76 38">
          ${blades}
          <path d="M27 38c-1-6 1-9 3-11h18c2 2 4 6 3 11z" fill="#b4714a" /><path d="M65 38c0-6 4-9 11-9v9z" fill="#d9793f" />
          <path d="M25 5l7 6h12l8-6-1 12-1 5-8 7-3 5-4-5-8-7-1-5z" fill="#c97d54" />
          <path d="M26 7l5 5-3 5zM51 7l-5 5 3 5z" fill="#5b4038" />
          <path d="M29 24l6 2 2 6-2 1-4-4zM48 24l-6 2-2 6 2 1 5-4zM30 38c2-4 5-5 8-5s7 1 9 5z" fill="#f3ece6" />
          <path d="M32 18l3 1M44 18l-3 1" stroke="#2b1b14" stroke-width="1.600" /><ellipse cx="38.500" cy="29" rx="2" ry="1.500" fill="#1f1512" />
        </svg>
      </label>
      <button class="view" aria-label="Task view"><svg viewBox="0 0 16 15" fill="none" stroke="#fff" stroke-width="1.200"><path d="M1 3.500h10v8H1zM1 0v2M11 0v2M1 13v2M11 13v2M1 1.500h10M1 13.500h10M14.500 0v3.500M14.500 9v6" /><path d="M13 5h3v3h-3z" fill="#fff" stroke="none" /></svg></button>
      ${apps.map((a) => html`<button class="app ${a.on ?? ""}" aria-label=${a.name}><svg viewBox="0 0 24 24">${a.art}</svg></button>`)}
      <div class="tray">
        <button class="wx"><svg viewBox="0 0 24 22"><circle cx="13" cy="11" r="10.500" fill="#f6a21c" /><path d="M13 .5a10.500 10.500 0 0 1 10 7H4a10 10 0 0 1 9-7z" fill="#fbc12d" /><path d="M6 5h18M1 9.500h16M4 13.500h19M0 17.500h14" stroke="#f5e3c0" stroke-width="1.700" /></svg><span>24°C</span></button>
        <div class="sys">
          <svg viewBox="0 0 16 16"><path d="M2 11l6-6 6 6" fill="none" stroke="#fff" stroke-width="1.300" /></svg>
          <svg viewBox="0 0 16 16"><path d="M1 4.500h12.500v7H1zM14 6.500h1.500v3H14" fill="none" stroke="#fff" stroke-width="1.200" /><path d="M2.500 6h3v4h-3z" fill="#fff" /></svg>
          <svg viewBox="0 0 16 16"><path d="M6 3h9v8H4V8M9.500 11v3M6 14.500h7" fill="none" stroke="#fff" stroke-width="1.400" /><path d="M1 3h5v4H1zM2 1.500h3V3H2z" fill="#fff" /></svg>
          <svg viewBox="0 0 16 16" fill="none" stroke="#fff" stroke-width="1.200"><rect x="3" y="5" width="7" height="7" rx="1.500" /><path d="M10 8l3-2v5l-3-2M4 2.500c2-1.500 5-1.500 7 0M4 14.500c2 1.200 5 1.200 7 0" /></svg>
          <svg viewBox="0 0 16 16"><path d="M1 3.500l13-2v9M1 3.500v9.500l7 1M10.500 5C7 4 5 7 5.500 10c2 1 4-1 3.500-3H6" fill="none" stroke="#fff" stroke-width="1.200" /><circle cx="12.500" cy="12.500" r="3.500" fill="#2a80d4" /></svg>
          <svg viewBox="0 0 16 16" fill="none" stroke="#fff" stroke-width="1.200"><path d="M1 6h2.500L7 3v10L3.500 10H1zM9 6c1 1 1 3 0 4M11 4c2.200 2 2.200 6 0 8M13 2c3.500 3 3.500 9 0 12" /></svg>
          <svg viewBox="0 0 16 16" fill="none" stroke="#e8e8e8" stroke-width="1.300"><path d="M2.500 14C3 8 7 3.500 13.500 2.500M5.500 14.500c.5-4.500 3.500-7.500 8-8.500M8.500 15c.3-3 2-5 5-5.800" /><circle cx="12.500" cy="13.500" r="1.500" fill="#fff" stroke="none" /></svg>
        </div>
        <div class="clock"><span>10:11 PM</span><span>4/22/2023</span></div>
        <button class="note" aria-label="1 notification"><svg viewBox="0 0 24 24"><path d="M2 4h14v11H7l-3 3v-3H2z" fill="#fff" /><path d="M4.500 7h9M4.500 9.500h9M4.500 12h6" stroke="#444" /><circle cx="18" cy="16.500" r="7.300" fill="#3f4040" stroke="#b4b4b4" /><path d="M16 14l2.300-1.300v7.800" fill="none" stroke="#fff" stroke-width="1.600" /></svg></button>
        <div class="peek"></div>
      </div>
    </footer>`;
  }

  render() {
    const up = html`<svg viewBox="0 0 11 7"><path d="M1 6l4.500-4.500L10 6" fill="none" stroke="#262d3a" stroke-width="1.800" /></svg>`;
    return html`
      ${this.strip()} ${this.toolbar()}
      <div class="page">
        <div class="site">
          ${this.header()}
          <div class="body">
            ${this.sidebar()}
            <main class="main">
              <h1><span>Labels, Selectors &amp; Annotations</span></h1>
              ${this.player()}
            </main>
          </div>
          <div class="float">
            <button class="voice" aria-label="Voice input"><svg viewBox="0 0 20 22"><path d="M11 3h9v8h-9z" fill="#fdd835" /><rect x="7" y="1" width="6" height="12" rx="3" fill="#2f83f0" /><path d="M3 10c0 8 14 8 14 0M10 16v5" fill="none" stroke="#2f83f0" stroke-width="1.800" /></svg></button>
            <button class="chat" aria-label="Chat"><svg viewBox="0 0 16 15"><path d="M5 1h6a4.800 4.800 0 0 1 2.500 9L8.800 14.500V10.700H5A4.800 4.800 0 0 1 5 1z" fill="#fff" /></svg></button>
          </div>
        </div>
        ${this.scrollbar()}
      </div>
      <div class="shelf">
        <div class="file"><svg viewBox="0 0 16 17"><path d="M2 1h10l1 3v12H2z" fill="#f6dc7c" stroke="#dcb94f" stroke-width=".8" /><path d="M12 10h3v6h-3z" fill="#e9c552" /><path d="M7 1h4v15H7z" fill="#e8e6df" /><path d="M9 1v15" stroke="#54504a" stroke-width="2" stroke-dasharray="1.500 1" /></svg><span>WhatsApp Unknow....zip</span><button aria-label="Options">${up}</button></div>
        <div class="file"><svg viewBox="0 0 16 17"><path d="M2 .500h8.500l3 3v13H2z" fill="#fdfdfd" stroke="#8a8f98" stroke-width=".8" /><path d="M4.500 6h7v6.500h-7z" fill="#1d7ad0" /><path d="M4.500 12.500V10l3-2 4 4.500z" fill="#0d3a73" /></svg><span>WhatsApp Image....jpeg</span><button aria-label="Options">${up}</button></div>
        <button class="all">Show all</button>
        <button class="drop" aria-label="Close downloads">${cross(1.7)}</button>
      </div>
      ${this.taskbar()}
      <div class="mill"><b>Activate Windows</b><span>Go to Settings to activate Windows.</span></div>
    `;
  }
}
